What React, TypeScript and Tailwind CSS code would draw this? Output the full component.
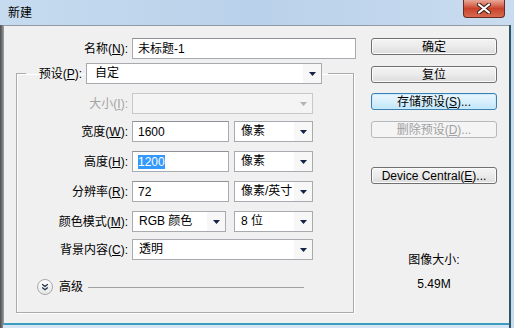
import React from 'react';

const Arrow = ({ disabled }: { disabled?: boolean }) => (
  <svg width="7" height="4" viewBox="0 0 7 4">
    <path d="M0 0h7L3.5 4z" fill={disabled ? '#b4b4b4' : '#15234a'} />
  </svg>
);

const Combo = ({ value, className, disabled }: { value: string; className: string; disabled?: boolean }) => (
  <div
    className={`flex h-[21px] items-center border ${disabled ? 'border-[#c8c8c8] bg-[#f4f4f4]' : 'border-[#a7abb0] bg-white'} ${className}`}
  >
    <span className="flex-1 overflow-hidden whitespace-nowrap pl-[6px] leading-[19px]">{value}</span>
    <span className={`flex h-full w-[18px] shrink-0 items-center justify-center ${disabled ? '' : 'bg-[#f7f7f7]'}`}>
      <Arrow disabled={disabled} />
    </span>
  </div>
);

const TextBox = ({ children, className }: { children: React.ReactNode; className: string }) => (
  <div className={`flex h-[21px] items-center border border-[#a7abb0] border-t-[#8e9297] bg-white pl-[5px] ${className}`}>
    {children}
  </div>
);

const Label = ({ text, keyChar, disabled, className }: { text: string; keyChar: string; disabled?: boolean; className: string }) => (
  <span className={`text-right leading-[16px] ${disabled ? 'text-[#a3a3a3]' : 'text-black'} ${className}`}>
    {text}(<span className="underline underline-offset-1">{keyChar}</span>):
  </span>
);

const Button = ({ children, focused, disabled, className }: { children: React.ReactNode; focused?: boolean; disabled?: boolean; className: string }) => {
  const look = disabled
    ? 'border-[#b5b9bc] bg-[#f4f4f4] text-[#a0a0a0]'
    : focused
      ? 'border-[#3c7fb1] bg-gradient-to-b from-[#eaf6fd] via-[#d9f0fc] to-[#bee6fd] text-black shadow-[inset_0_0_0_1px_#c8ecfd]'
      : 'border-[#707070] bg-gradient-to-b from-[#f4f4f4] via-[#ebebeb] to-[#dcdcdc] text-black shadow-[inset_0_0_0_1px_#fbfbfb]';
  return (
    <div className={`flex h-[17px] w-[126px] items-center justify-center rounded-[3px] border leading-[14px] ${look} ${className}`}>
      {children}
    </div>
  );
};

export default function App() {
  return (
    <div className="h-[328px] w-[514px] overflow-hidden bg-[#d6e5f3] font-['Liberation_Sans','Noto_Sans_CJK_SC',sans-serif] text-[12px] text-black">
      {/* title bar */}
      <div className="flex h-[25px] items-start bg-gradient-to-r from-[#c6dbef] via-[#b9d1ea] to-[#cadcef]">
        <span className="ml-[8px] mt-[5px] leading-[16px]">新建</span>
        <div className="ml-auto mr-[9px] flex h-[18px] w-[42px] items-center justify-center rounded-b-[4px] border border-t-0 border-[#6b2a1f] bg-gradient-to-b from-[#e8a898] via-[#c9432c] to-[#d66a4e]">
          <svg width="14" height="11" viewBox="0 0 14 11">
            <path d="M2 1.5l10 8M12 1.5l-10 8" stroke="#3a1d18" strokeWidth="4" strokeLinecap="round" />
            <path d="M2 1.5l10 8M12 1.5l-10 8" stroke="#ffffff" strokeWidth="2.2" strokeLinecap="round" />
          </svg>
        </div>
      </div>

      {/* body with frame */}
      <div className="flex h-[303px]">
        <div className="w-[3px] bg-gradient-to-r from-[#4c4c4c] to-[#8a8a8a]" />
        <div className="flex h-[300px] w-[506px] flex-col border-t border-l border-[#8f9aa5] border-b-[2px] border-b-[#3c9dc0] bg-[#f0f0f0]">
          <div className="flex flex-1">
            {/* left column */}
            <div className="flex w-[356px] flex-col pt-[12px]">
              <div className="flex items-center gap-[4px]">
                <Label text="名称" keyChar="N" className="w-[124px]" />
                <TextBox className="h-[20px] w-[224px]">
                  <span className="leading-[16px]">未标题-1</span>
                </TextBox>
              </div>

              <fieldset className="ml-[12px] mt-[4px] w-[338px] border border-[#aaaaaa] pb-[17px] shadow-[1px_1px_0_#ffffff,inset_1px_1px_0_#ffffff]">
                <legend className="ml-[9px] pl-[9px] pr-[6px]">
                  <div className="flex items-center gap-[4px]">
                    <Label text="预设" keyChar="P" className="w-[47px]" />
                    <Combo value="自定" className="w-[236px] [&>span:first-child]:pl-[8px]" />
                  </div>
                </legend>

                <div className="mt-[9px] flex items-center gap-[4px]">
                  <Label text="大小" keyChar="I" disabled className="w-[111px]" />
                  <Combo value="" disabled className="w-[181px]" />
                </div>

                <div className="mt-[7px] flex items-center gap-[4px]">
                  <Label text="宽度" keyChar="W" className="w-[111px]" />
                  <TextBox className="w-[97px]">
                    <span className="leading-[16px]">1600</span>
                  </TextBox>
                  <Combo value="像素" className="ml-[1px] w-[79px]" />
                </div>

                <div className="mt-[9px] flex items-center gap-[4px]">
                  <Label text="高度" keyChar="H" className="w-[111px]" />
                  <TextBox className="w-[97px]">
                    <span className="bg-[#3399ff] leading-[14px] text-white">1200</span>
                  </TextBox>
                  <Combo value="像素" className="ml-[1px] w-[79px]" />
                </div>

                <div className="mt-[9px] flex items-center gap-[4px]">
                  <Label text="分辨率" keyChar="R" className="w-[111px]" />
                  <TextBox className="w-[97px]">
                    <span className="leading-[16px]">72</span>
                  </TextBox>
                  <Combo value="像素/英寸" className="ml-[1px] w-[79px]" />
                </div>

                <div className="mt-[9px] flex items-center gap-[4px]">
                  <Label text="颜色模式" keyChar="M" className="w-[111px]" />
                  <Combo value="RGB 颜色" className="w-[94px]" />
                  <Combo value="8 位" className="ml-[4px] w-[79px]" />
                </div>

                <div className="mt-[7px] flex items-center gap-[4px]">
                  <Label text="背景内容" keyChar="C" className="w-[111px]" />
                  <Combo value="透明" className="w-[181px]" />
                </div>

                <div className="ml-[20px] mt-[19px] flex items-center">
                  <span className="flex h-[16px] w-[16px] items-center justify-center rounded-full border border-[#a8a8a8] bg-gradient-to-b from-[#ffffff] to-[#e6e6e6]">
                    <svg width="8" height="8" viewBox="0 0 8 8">
                      <path d="M1.2 1.2l2.8 2.3 2.8-2.3M1.2 4.5L4 6.8l2.8-2.3" stroke="#1e2a44" strokeWidth="1.2" fill="none" />
                    </svg>
                  </span>
                  <span className="ml-[6px] leading-[16px]">高级</span>
                  <span className="ml-[5px] h-[1px] w-[216px] bg-[#a0a0a0]" />
                </div>
              </fieldset>
            </div>

            {/* right column */}
            <div className="flex flex-col items-start pl-[11px] pt-[12px]">
              <Button className="">确定</Button>
              <Button className="mt-[11px]">复位</Button>
              <Button focused className="mt-[10px]">
                <span>
                  存储预设(<span className="underline underline-offset-1">S</span>)...
                </span>
              </Button>
              <Button disabled className="mt-[11px]">
                <span>
                  删除预设(<span className="underline underline-offset-1">D</span>)...
                </span>
              </Button>
              <Button className="mt-[29px]">
                <span>
                  Device Central(<span className="underline underline-offset-1">E</span>)...
                </span>
              </Button>
              <div className="mt-[68px] w-[126px] text-center leading-[16px]">图像大小:</div>
              <div className="mt-[8px] w-[126px] text-center leading-[16px]">5.49M</div>
            </div>
          </div>
        </div>
        <div className="w-[2px] bg-[#2d5567]" />
        <div className="flex-1 bg-[#c9dced]" />
      </div>
    </div>
  );
}
